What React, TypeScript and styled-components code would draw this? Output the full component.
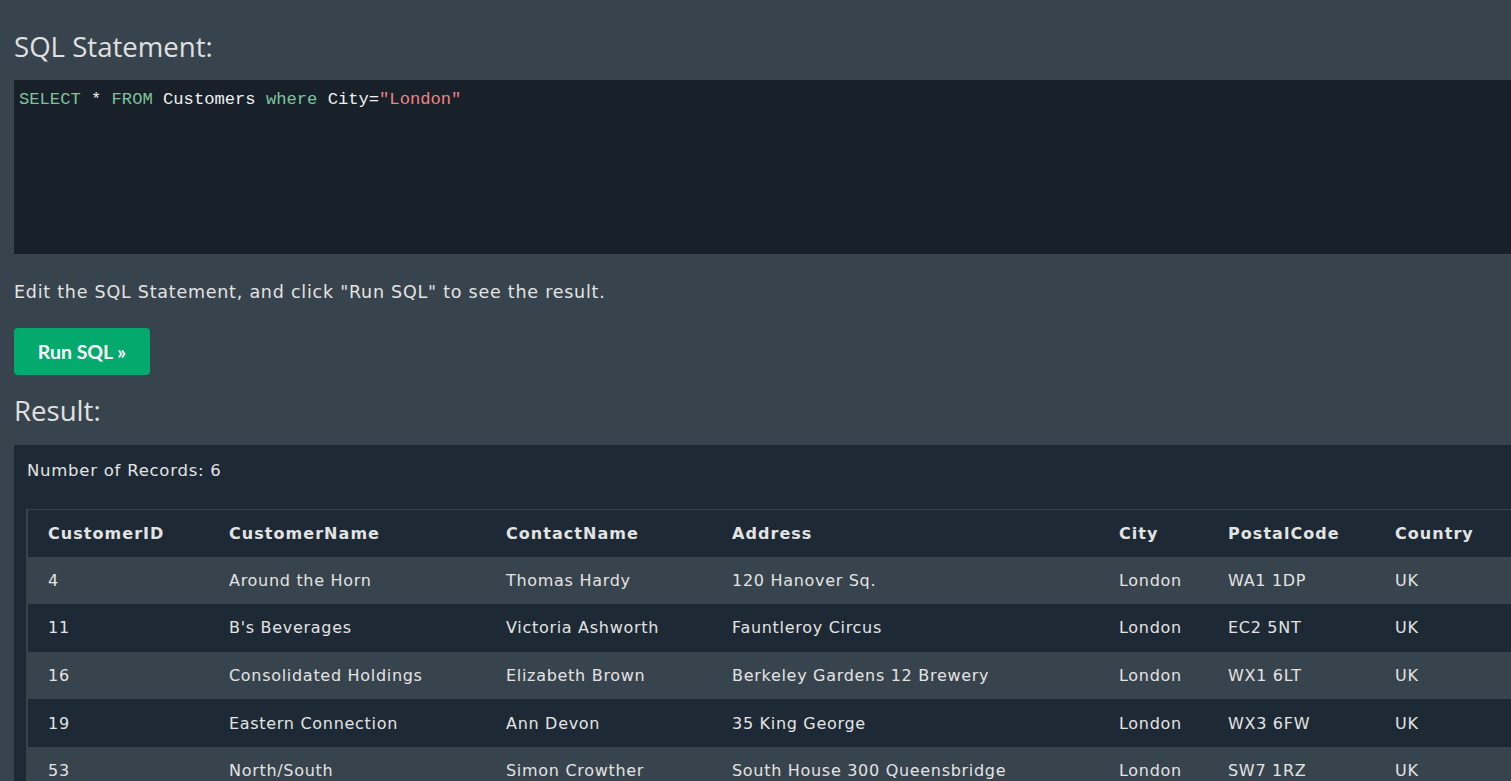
import React from 'react';
import styled, { createGlobalStyle } from 'styled-components';

const GlobalStyle = createGlobalStyle`
  html, body {
    margin: 0;
    padding: 0;
    background-color: #38444d;
    overflow: hidden;
  }
  body {
    font-family: 'DejaVu Sans', Verdana, sans-serif;
    color: #dddddd;
  }
`;

interface Customer {
  id: number;
  name: string;
  contact: string;
  address: string;
  city: string;
  postal: string;
  country: string;
}

const customers: Customer[] = [
  { id: 4, name: 'Around the Horn', contact: 'Thomas Hardy', address: '120 Hanover Sq.', city: 'London', postal: 'WA1 1DP', country: 'UK' },
  { id: 11, name: "B's Beverages", contact: 'Victoria Ashworth', address: 'Fauntleroy Circus', city: 'London', postal: 'EC2 5NT', country: 'UK' },
  { id: 16, name: 'Consolidated Holdings', contact: 'Elizabeth Brown', address: 'Berkeley Gardens 12 Brewery', city: 'London', postal: 'WX1 6LT', country: 'UK' },
  { id: 19, name: 'Eastern Connection', contact: 'Ann Devon', address: '35 King George', city: 'London', postal: 'WX3 6FW', country: 'UK' },
  { id: 53, name: 'North/South', contact: 'Simon Crowther', address: 'South House 300 Queensbridge', city: 'London', postal: 'SW7 1RZ', country: 'UK' },
  { id: 72, name: 'Seven Seas Imports', contact: 'Hari Kumar', address: '90 Wadhurst Rd.', city: 'London', postal: 'OX15 4NB', country: 'UK' },
];

const columns = [
  { label: 'CustomerID', width: 182 },
  { label: 'CustomerName', width: 277 },
  { label: 'ContactName', width: 226 },
  { label: 'Address', width: 387 },
  { label: 'City', width: 109 },
  { label: 'PostalCode', width: 167 },
  { label: 'Country', width: 160 },
];

const App = (): JSX.Element => {
  return (
    <>
      <GlobalStyle />
      <Page>
        <Heading>SQL Statement:</Heading>
        <CodeBox>
          <Keyword>SELECT</Keyword> * <Keyword>FROM</Keyword> Customers{' '}
          <Keyword>where</Keyword> City=<Str>"London"</Str>
        </CodeBox>
        <Hint>Edit the SQL Statement, and click "Run SQL" to see the result.</Hint>
        <RunButton>Run SQL »</RunButton>
        <Heading $second>Result:</Heading>
        <ResultPanel>
          <Records>Number of Records: 6</Records>
          <Table>
            <colgroup>
              {columns.map((c) => (
                <col key={c.label} style={{ width: c.width }} />
              ))}
            </colgroup>
            <thead>
              <tr>
                {columns.map((c) => (
                  <Th key={c.label}>{c.label}</Th>
                ))}
              </tr>
            </thead>
            <tbody>
              {customers.map((item, i) => (
                <Row key={item.id} $odd={i % 2 === 0}>
                  <Td>{item.id}</Td>
                  <Td>{item.name}</Td>
                  <Td>{item.contact}</Td>
                  <Td>{item.address}</Td>
                  <Td>{item.city}</Td>
                  <Td>{item.postal}</Td>
                  <Td>{item.country}</Td>
                </Row>
              ))}
            </tbody>
          </Table>
        </ResultPanel>
      </Page>
    </>
  );
};

export default App;

const Page = styled.div`
  padding: 0 0 0 14px;
  width: 1600px;
`;

const Heading = styled.h3<{ $second?: boolean }>`
  font-family: 'Open Sans', 'Segoe UI', sans-serif;
  font-weight: 400;
  font-size: 27.6px;
  color: #e0e0e0;
  margin: 0;
  line-height: 38px;
  padding: ${(p) => (p.$second ? '16px 0 16px' : '27px 0 15px')};
`;

const CodeBox = styled.div`
  background-color: #18202a;
  height: 174px;
  box-sizing: border-box;
  padding: 8px 5px;
  font-family: 'Liberation Mono', monospace;
  font-size: 17.15px;
  line-height: 24px;
  color: #f0f0f0;
  white-space: pre;
`;

const Keyword = styled.span`
  color: #7dc49a;
`;

const Str = styled.span`
  color: #f08484;
`;

const Hint = styled.p`
  font-size: 17.5px;
  letter-spacing: 0.76px;
  line-height: 22px;
  margin: 27px 0 25px;
  color: #e3e3e3;
`;

const RunButton = styled.button`
  display: block;
  background-color: #04aa6d;
  color: #ffffff;
  border: none;
  border-radius: 4px;
  width: 136px;
  height: 47px;
  padding: 0;
  font-family: 'Lato', 'Open Sans', sans-serif;
  font-weight: 700;
  font-size: 19.5px;
  cursor: pointer;
`;

const ResultPanel = styled.div`
  background-color: #1d2a35;
  padding: 12px 0 0 12px;
  height: 400px;
`;

const Records = styled.div`
  font-size: 16.5px;
  letter-spacing: 0.75px;
  line-height: 28px;
  padding-left: 1px;
  color: #e3e3e3;
  margin-bottom: 24px;
`;

const Table = styled.table`
  border-collapse: collapse;
  table-layout: fixed;
  border-top: 1px solid #38444d;
  border-left: 2px solid #38444d;
  font-size: 16px;
  letter-spacing: 0.7px;
  color: #e3e3e3;
`;

const Th = styled.th`
  text-align: left;
  font-weight: 700;
  letter-spacing: 1.05px;
  height: 47px;
  padding: 0 20px;
  box-sizing: border-box;
  background-color: #1d2a35;
  white-space: nowrap;
`;

const Row = styled.tr<{ $odd: boolean }>`
  background-color: ${(p) => (p.$odd ? '#38444d' : '#1d2a35')};
`;

const Td = styled.td`
  height: 47.6px;
  padding: 0 20px;
  box-sizing: border-box;
  white-space: nowrap;
`;
